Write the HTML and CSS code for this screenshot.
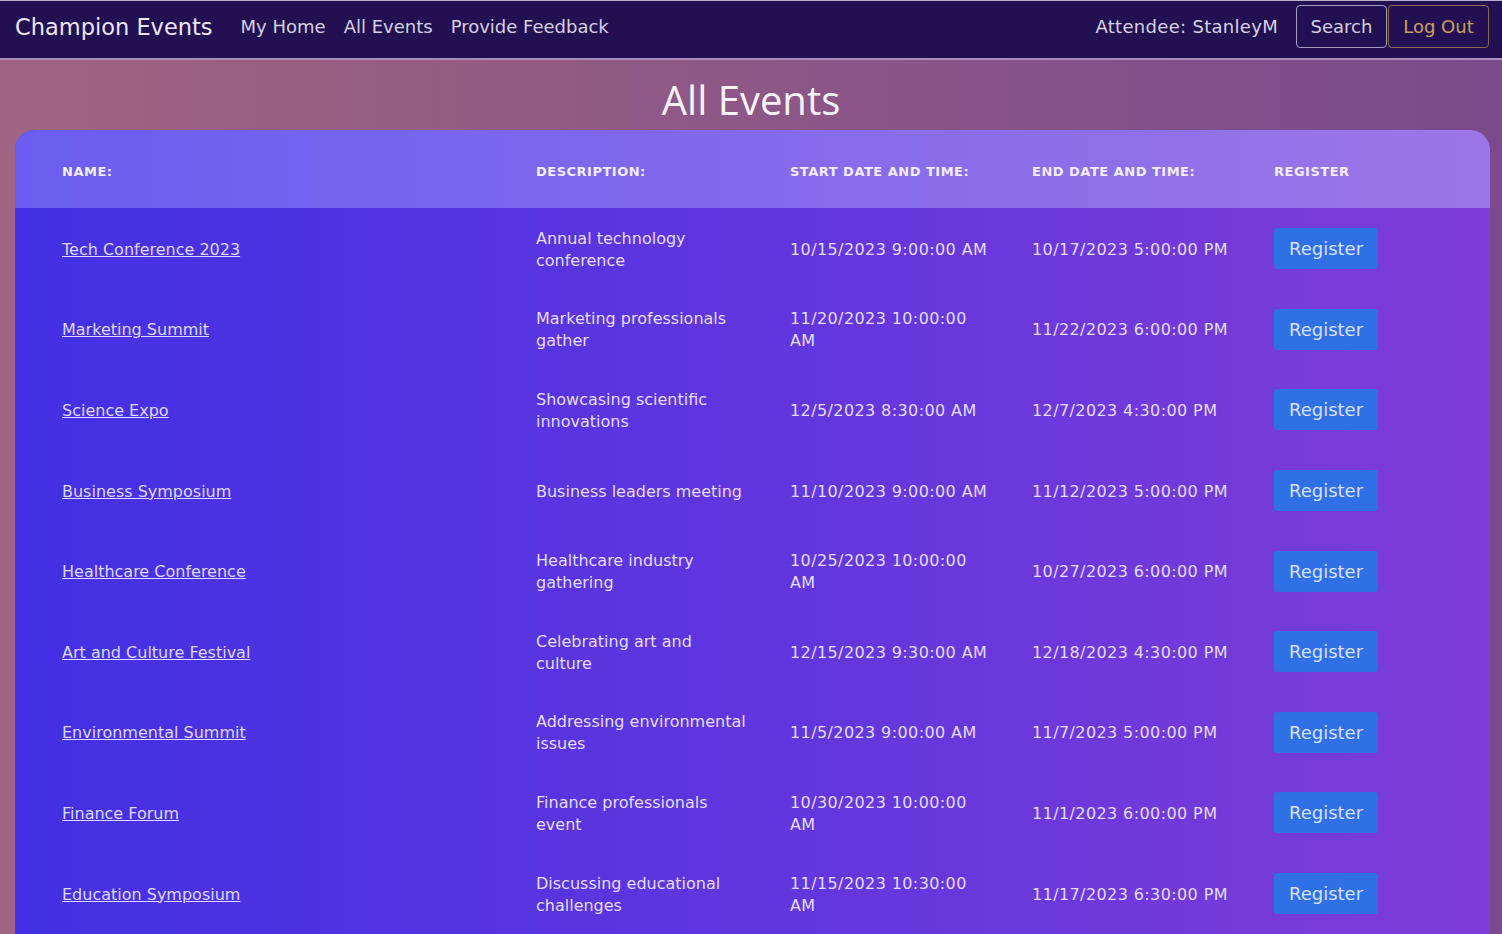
FILE: index.html
```html
<!DOCTYPE html>
<html lang="en">
<head>
<meta charset="utf-8">
<title>All Events - Champion Events</title>
<link rel="stylesheet" href="styles.css">
</head>
<body>
<nav class="navbar">
  <div class="nav-left">
    <a class="brand" href="#">Champion Events</a>
    <a class="nav-link" href="#">My Home</a>
    <a class="nav-link" href="#">All Events</a>
    <a class="nav-link" href="#">Provide Feedback</a>
  </div>
  <div class="nav-right">
    <span class="attendee">Attendee: StanleyM</span>
    <div class="nav-buttons">
      <button class="btn-outline btn-search">Search</button>
      <button class="btn-outline btn-logout">Log Out</button>
    </div>
  </div>
</nav>
<main class="page">
  <h1 class="page-title">All Events</h1>
  <div class="table-card">
    <table class="events">
      <colgroup>
        <col class="c-name"><col class="c-desc"><col class="c-start"><col class="c-end"><col class="c-reg">
      </colgroup>
      <thead>
        <tr>
          <th>Name:</th>
          <th>Description:</th>
          <th>Start Date and Time:</th>
          <th>End Date and Time:</th>
          <th>Register</th>
        </tr>
      </thead>
      <tbody>
        <tr><td><a href="#">Tech Conference 2023</a></td><td>Annual technology conference</td><td>10/15/2023 9:00:00 AM</td><td>10/17/2023 5:00:00 PM</td><td><button class="btn-register">Register</button></td></tr>
        <tr><td><a href="#">Marketing Summit</a></td><td>Marketing professionals gather</td><td>11/20/2023 10:00:00 AM</td><td>11/22/2023 6:00:00 PM</td><td><button class="btn-register">Register</button></td></tr>
        <tr><td><a href="#">Science Expo</a></td><td>Showcasing scientific innovations</td><td>12/5/2023 8:30:00 AM</td><td>12/7/2023 4:30:00 PM</td><td><button class="btn-register">Register</button></td></tr>
        <tr><td><a href="#">Business Symposium</a></td><td>Business leaders meeting</td><td>11/10/2023 9:00:00 AM</td><td>11/12/2023 5:00:00 PM</td><td><button class="btn-register">Register</button></td></tr>
        <tr><td><a href="#">Healthcare Conference</a></td><td>Healthcare industry gathering</td><td>10/25/2023 10:00:00 AM</td><td>10/27/2023 6:00:00 PM</td><td><button class="btn-register">Register</button></td></tr>
        <tr><td><a href="#">Art and Culture Festival</a></td><td>Celebrating art and culture</td><td>12/15/2023 9:30:00 AM</td><td>12/18/2023 4:30:00 PM</td><td><button class="btn-register">Register</button></td></tr>
        <tr><td><a href="#">Environmental Summit</a></td><td>Addressing environmental issues</td><td>11/5/2023 9:00:00 AM</td><td>11/7/2023 5:00:00 PM</td><td><button class="btn-register">Register</button></td></tr>
        <tr><td><a href="#">Finance Forum</a></td><td>Finance professionals event</td><td>10/30/2023 10:00:00 AM</td><td>11/1/2023 6:00:00 PM</td><td><button class="btn-register">Register</button></td></tr>
        <tr><td><a href="#">Education Symposium</a></td><td>Discussing educational challenges</td><td>11/15/2023 10:30:00 AM</td><td>11/17/2023 6:30:00 PM</td><td><button class="btn-register">Register</button></td></tr>
      </tbody>
    </table>
  </div>
</main>
</body>
</html>
```
FILE: styles.css
```css
* { box-sizing: border-box; }

html, body {
  margin: 0;
  padding: 0;
}

body {
  font-family: "DejaVu Sans", Verdana, sans-serif;
  background: linear-gradient(to right, #a06480, #7a4a8c);
  min-height: 934px;
  overflow: hidden;
}

.navbar {
  height: 60px;
  background: #231052;
  border-top: 1px solid #b8b0c0;
  border-bottom: 2px solid #a88cbc;
  display: flex;
  align-items: center;
  justify-content: space-between;
  padding: 0 13px 6px 15px;
}

.nav-left {
  display: flex;
  align-items: center;
  gap: 18px;
}

.brand {
  color: #ece6f6;
  text-decoration: none;
  font-size: 22.5px;
  margin-right: 10px;
}

.nav-link {
  color: #d6d0e4;
  text-decoration: none;
  font-size: 18px;
}

.nav-right {
  display: flex;
  align-items: center;
  gap: 18px;
}

.attendee {
  color: #d8d2e6;
  font-size: 18px;
  letter-spacing: 0.3px;
}

.nav-buttons {
  display: flex;
  gap: 1px;
}

.btn-outline {
  font-family: inherit;
  font-size: 18px;
  height: 43px;
  background: transparent;
  border-radius: 4px;
  padding: 0;
  cursor: pointer;
}

.btn-search {
  width: 91px;
  color: #d4cee2;
  border: 1px solid #a99cc6;
}

.btn-logout {
  width: 101px;
  color: #c9a062;
  border: 1px solid #8e6a4e;
}

.page-title {
  margin: 0;
  height: 70px;
  line-height: 80px;
  text-align: center;
  font-family: "Open Sans", "DejaVu Sans", sans-serif;
  font-weight: 400;
  font-size: 40px;
  color: #f6f2fa;
}

.table-card {
  margin: 0 12px 0 15px;
  border-radius: 20px 20px 0 0;
  overflow: hidden;
  background: linear-gradient(to right, #4230e4, #7e3cd8);
  min-height: 804px;
}

.events {
  width: 100%;
  border-collapse: collapse;
  table-layout: fixed;
}

.c-name { width: 521px; }
.c-desc { width: 254px; }
.c-start { width: 242px; }
.c-end { width: 242px; }

.events thead tr {
  background: linear-gradient(to right, #6a5ef0, #9c76e6);
  height: 78px;
}

.events th {
  text-align: left;
  font-size: 13px;
  font-weight: bold;
  letter-spacing: 0.5px;
  text-transform: uppercase;
  color: #f2ecfc;
  padding: 4px 10px 0 0;
}

.events th:first-child,
.events td:first-child {
  padding-left: 47px;
}

.events tbody tr {
  height: 80.6px;
}

.events td {
  font-size: 16px;
  line-height: 22px;
  color: #e4dcf8;
  vertical-align: middle;
  padding: 3px 30px 0 0;
}

.events td:last-child {
  padding-top: 1px;
}

.events td:nth-child(2) {
  padding-right: 42px;
}

.events td:nth-child(3),
.events td:nth-child(4) {
  letter-spacing: 0.4px;
}

.events td:nth-child(3) {
  padding-right: 40px;
}

.events td a {
  color: #ddd8fc;
  text-decoration: underline;
}

.btn-register {
  font-family: inherit;
  width: 104px;
  height: 41px;
  background: #2f70e6;
  color: #d8e0fc;
  border: none;
  border-radius: 3px;
  font-size: 18px;
  cursor: pointer;
}
```
